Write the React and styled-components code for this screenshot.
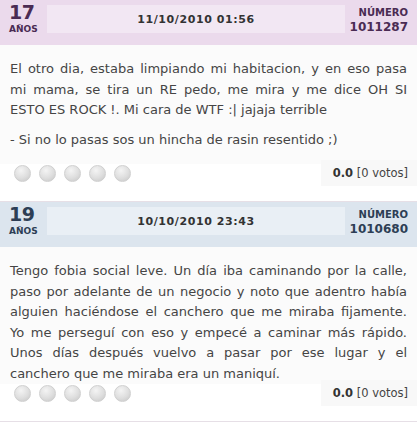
import React from "react";
import styled, { createGlobalStyle } from "styled-components";

const GlobalStyle = createGlobalStyle`
  html, body {
    margin: 0;
    padding: 0;
    background: #ffffff;
  }
  body {
    font-family: "DejaVu Sans", Verdana, sans-serif;
  }
`;

const themes = {
  purple: { bar: "#ebdaec", box: "#f2e7f3", ink: "#4a2b53" },
  blue: { bar: "#dce5ee", box: "#e9eff5", ink: "#2d3e55" },
};

const stories = [
  {
    id: 1011287,
    age: 17,
    date: "11/10/2010 01:56",
    color: "purple",
    tail: 14,
    text: [
      "El otro dia, estaba limpiando mi habitacion, y en eso pasa mi mama, se tira un RE pedo, me mira y me dice OH SI ESTO ES ROCK !. Mi cara de WTF :| jajaja terrible",
      "- Si no lo pasas sos un hincha de rasin resentido ;)",
    ],
  },
  {
    id: 1010680,
    age: 19,
    date: "10/10/2010 23:43",
    color: "blue",
    tail: 0,
    text: [
      "Tengo fobia social leve. Un día iba caminando por la calle, paso por adelante de un negocio y noto que adentro había alguien haciéndose el canchero que me miraba fijamente. Yo me perseguí con eso y empecé a caminar más rápido. Unos días después vuelvo a pasar por ese lugar y el canchero que me miraba era un maniquí.",
    ],
  },
];

const App = () => {
  return (
    <Page>
      <GlobalStyle />
      {stories.map((s) => (
        <Card key={s.id}>
          <Header $t={themes[s.color]}>
            <Age $t={themes[s.color]}>
              <AgeNum>{s.age}</AgeNum>
              <AgeLabel>AÑOS</AgeLabel>
            </Age>
            <DateBox $t={themes[s.color]}>{s.date}</DateBox>
            <Numero $t={themes[s.color]}>
              <NumLabel>NÚMERO</NumLabel>
              <NumValue>{s.id}</NumValue>
            </Numero>
          </Header>
          <Body $tail={s.tail}>
            {s.text.map((p, i) => (
              <Para key={i}>{p}</Para>
            ))}
          </Body>
          <RatingRow>
            <Stars>
              {[0, 1, 2, 3, 4].map((n) => (
                <Dot key={n} />
              ))}
            </Stars>
            <Score>
              <b>0.0</b> [0 votos]
            </Score>
          </RatingRow>
        </Card>
      ))}
    </Page>
  );
};

export default App;

const Page = styled.div`
  width: 417px;
  display: flex;
  flex-direction: column;
`;
const Card = styled.div`
  display: flex;
  flex-direction: column;
  border-bottom: 1px solid #e6dfe6;
`;
const Header = styled.div`
  display: flex;
  align-items: flex-start;
  height: 45px;
  background: ${(p) => p.$t.bar};
`;
const Age = styled.div`
  width: 47px;
  padding: 1px 0 0 9px;
  box-sizing: border-box;
  color: ${(p) => p.$t.ink};
  display: flex;
  flex-direction: column;
`;
const AgeNum = styled.div`
  font-size: 19px;
  font-weight: bold;
  line-height: 22px;
  letter-spacing: -0.5px;
`;
const AgeLabel = styled.div`
  font-size: 9px;
  font-weight: bold;
  line-height: 11px;
  margin-top: 1px;
`;
const DateBox = styled.div`
  flex: 1;
  margin-top: 5px;
  height: 28px;
  background: ${(p) => p.$t.box};
  display: flex;
  align-items: center;
  justify-content: center;
  font-size: 11px;
  font-weight: bold;
  color: #333;
  letter-spacing: 0.6px;
`;
const Numero = styled.div`
  width: 72px;
  padding: 7px 9px 0 0;
  box-sizing: border-box;
  display: flex;
  flex-direction: column;
  align-items: flex-end;
  color: ${(p) => p.$t.ink};
  font-weight: bold;
`;
const NumLabel = styled.div`
  font-size: 10px;
  line-height: 12px;
`;
const NumValue = styled.div`
  font-size: 12px;
  line-height: 15px;
  margin-top: 1px;
`;
const Body = styled.div`
  padding: 14px 10px ${(p) => p.$tail}px;
  background: #fbfbfb;
  color: #454545;
  font-size: 13px;
  line-height: 20.5px;
  display: flex;
  flex-direction: column;
  gap: 9px;
`;
const Para = styled.p`
  margin: 0;
  text-align: justify;
`;
const RatingRow = styled.div`
  display: flex;
  justify-content: space-between;
  align-items: center;
  height: 18px;
  margin-bottom: 19px;
`;
const Stars = styled.div`
  display: flex;
  gap: 8px;
  padding-left: 14px;
`;
const Dot = styled.span`
  width: 17px;
  height: 17px;
  border-radius: 50%;
  box-sizing: border-box;
  border: 1px solid #d0d0d0;
  background: radial-gradient(circle at 40% 30%, #f4f4f4 0%, #dedede 55%, #c6c6c6 100%);
`;
const Score = styled.div`
  height: 26px;
  line-height: 26px;
  padding: 0 9px 0 12px;
  background: #f8f8f8;
  font-size: 11.5px;
  color: #444;
  b {
    color: #333;
  }
`;
